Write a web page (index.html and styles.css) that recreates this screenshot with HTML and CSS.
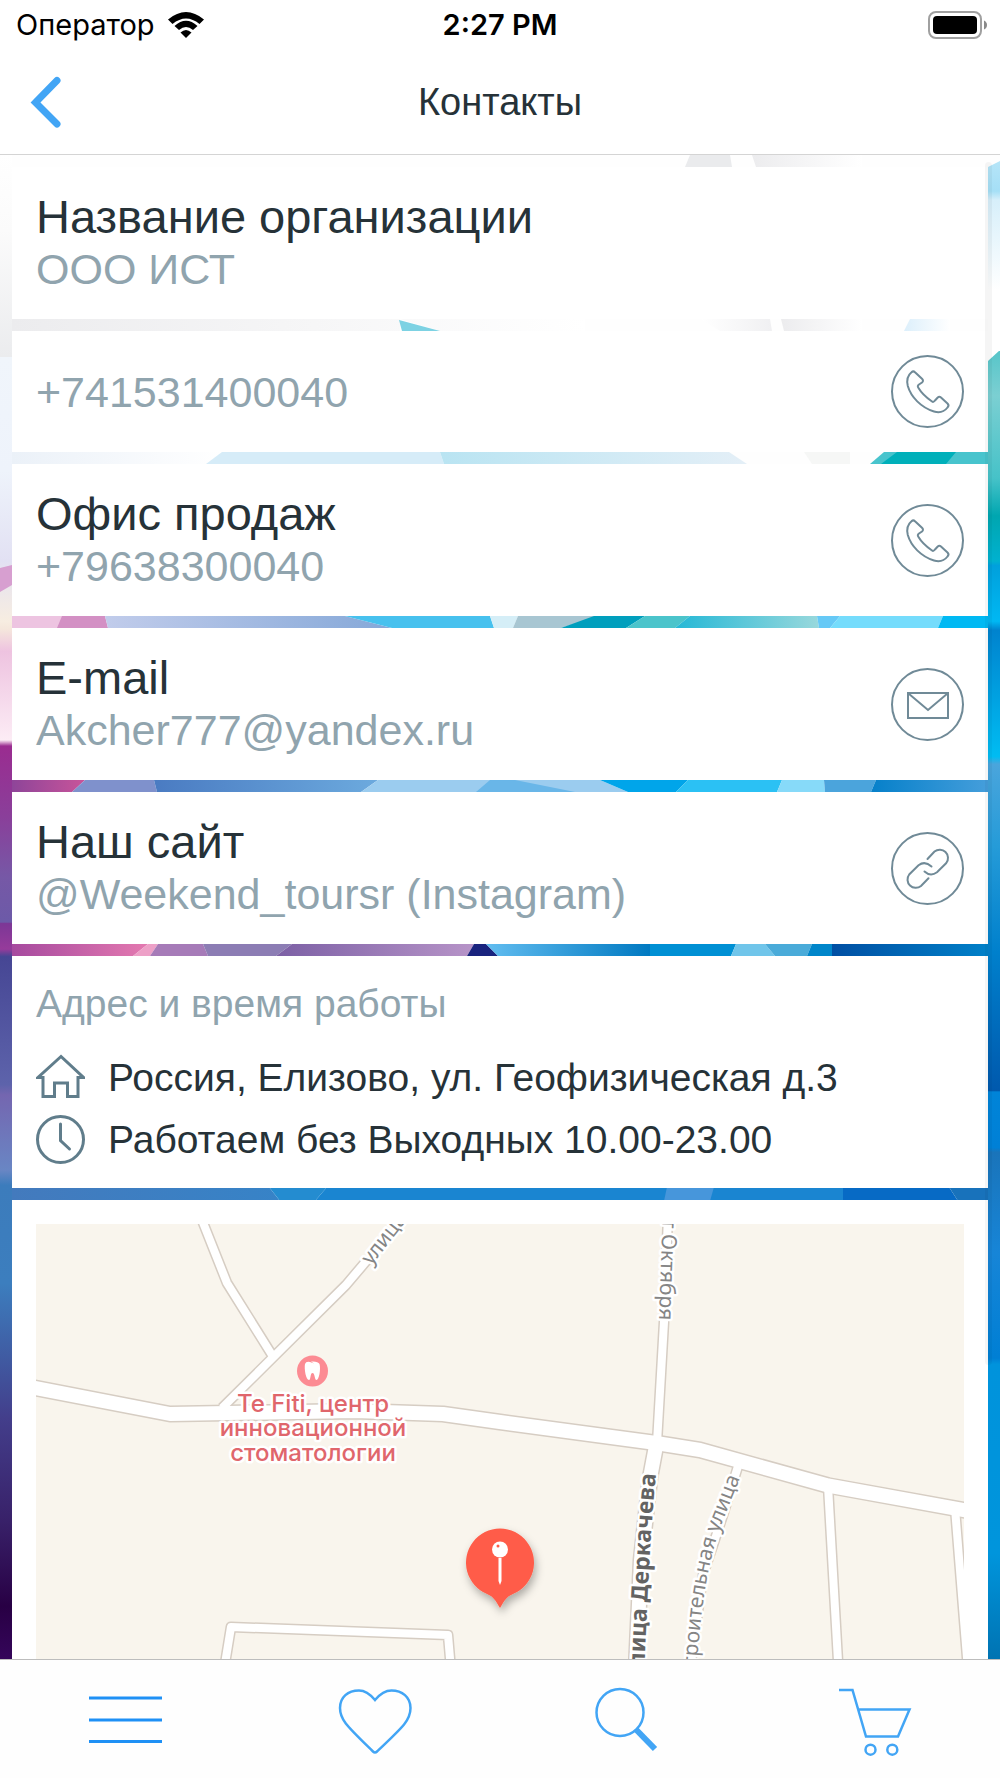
FILE: index.html
```html
<!DOCTYPE html>
<html lang="ru">
<head>
<meta charset="utf-8">
<meta name="viewport" content="width=device-width, initial-scale=1">
<title>Контакты</title>
<link rel="stylesheet" href="styles.css">
</head>
<body>
<div class="app">
  <header class="header">
    <div class="status">
      <div class="status-carrier">
        <span>Оператор</span>
        <svg class="wifi" viewBox="0 0 38 28" aria-hidden="true">
          <path d="M1 8.500Q19-6.500 37 8.500L32.500 13Q19 2 5.500 13Z"/>
          <path d="M7.500 15Q19 4.500 30.500 15L26 19Q19 13 12 19Z"/>
          <path d="M13.500 21.500Q19 16.500 24.500 21.500L19 27Z"/>
        </svg>
      </div>
      <span class="status-time">2:27 PM</span>
      <svg class="battery" viewBox="0 0 60 28" aria-hidden="true">
        <rect x="1" y="1" width="52" height="26" rx="7" fill="none" stroke="#a0a0a0" stroke-width="2"/>
        <rect x="5" y="5" width="44" height="18" rx="4"/>
        <path d="M56 9.500Q59 11 59 14T56 18.500Z" fill="#8a8a8a"/>
      </svg>
    </div>
    <nav class="navbar">
      <button class="back" type="button" aria-label="Назад">
        <svg viewBox="0 0 32 52" aria-hidden="true"><path d="M27 4.500L5.500 26.500L27 48"/></svg>
      </button>
      <h1 class="title">Контакты</h1>
    </nav>
  </header>

  <main class="content">
    <svg class="backdrop" viewBox="0 155 1000 1504" preserveAspectRatio="xMidYMin slice" aria-hidden="true">
      <defs>
        <linearGradient id="g1"><stop stop-color="#ececee"/><stop offset="1" stop-color="#fff"/></linearGradient>
        <linearGradient id="g2"><stop stop-color="#fff"/><stop offset="1" stop-color="#f0f0f2"/></linearGradient>
        <linearGradient id="g3"><stop stop-color="#dceffb"/><stop offset="1" stop-color="#fff"/></linearGradient>
        <linearGradient id="g4"><stop stop-color="#b9e4f2"/><stop offset="1" stop-color="#e4eff7"/></linearGradient>
        <linearGradient id="g5"><stop stop-color="#c1cceb"/><stop offset="1" stop-color="#85a8d8"/></linearGradient>
        <linearGradient id="g6"><stop stop-color="#25b8d6"/><stop offset="1" stop-color="#98d8dc"/></linearGradient>
        <linearGradient id="g7"><stop stop-color="#8e4599"/><stop offset="1" stop-color="#c8549a"/></linearGradient>
        <linearGradient id="g8"><stop stop-color="#4a7bc2"/><stop offset="1" stop-color="#6caade"/></linearGradient>
        <linearGradient id="g9"><stop stop-color="#0680ca"/><stop offset="1" stop-color="#459edb"/></linearGradient>
        <linearGradient id="g10"><stop stop-color="#a64a9f"/><stop offset="1" stop-color="#e479b0"/></linearGradient>
        <linearGradient id="g11"><stop stop-color="#7c60a5"/><stop offset="1" stop-color="#b794c8"/></linearGradient>
        <linearGradient id="g12"><stop stop-color="#62bdf0"/><stop offset="1" stop-color="#0079c1"/></linearGradient>
        <linearGradient id="g13"><stop stop-color="#004fa3"/><stop offset="1" stop-color="#0080c8"/></linearGradient>
        <linearGradient id="g14"><stop stop-color="#437abd"/><stop offset="1" stop-color="#3783c7"/></linearGradient>
        <linearGradient id="g15"><stop stop-color="#ebf1f8"/><stop offset="1" stop-color="#fff"/></linearGradient>
        <linearGradient id="left" x1="0" y1="155" x2="0" y2="1659" gradientUnits="userSpaceOnUse">
          <stop stop-color="#fff"/><stop offset=".05" stop-color="#fbfbfb"/><stop offset=".134" stop-color="#ebecee"/>
          <stop offset=".134" stop-color="#f0f5fb"/><stop offset=".21" stop-color="#eef3fb"/><stop offset=".27" stop-color="#e2e1f3"/>
          <stop offset=".31" stop-color="#f7ede1"/><stop offset=".315" stop-color="#f5e7dc"/>
          <stop offset=".33" stop-color="#eec3e0"/><stop offset=".389" stop-color="#fcecf5"/><stop offset=".393" stop-color="#9a2c90"/>
          <stop offset=".44" stop-color="#8a3f9a"/><stop offset=".48" stop-color="#7658a6"/><stop offset=".51" stop-color="#6c5aa8"/>
          <stop offset=".511" stop-color="#7c3796"/><stop offset=".528" stop-color="#963b9b"/><stop offset=".533" stop-color="#464694"/>
          <stop offset=".618" stop-color="#5d63ab"/><stop offset=".625" stop-color="#7466b0"/><stop offset=".675" stop-color="#6986c4"/>
          <stop offset=".685" stop-color="#3c7cbc"/><stop offset=".75" stop-color="#3c7ebe"/><stop offset=".84" stop-color="#433e8b"/>
          <stop offset=".91" stop-color="#382068"/><stop offset=".965" stop-color="#280044"/><stop offset="1" stop-color="#35065a"/>
        </linearGradient>
        <linearGradient id="right" x1="0" y1="155" x2="0" y2="1659" gradientUnits="userSpaceOnUse">
          <stop stop-color="#b9e6f8"/><stop offset=".024" stop-color="#a5dff6"/>
          <stop offset=".03" stop-color="#d7effa"/><stop offset=".09" stop-color="#fff"/><stop offset=".13" stop-color="#fff"/>
          <stop offset=".13" stop-color="#57c5c9"/><stop offset=".16" stop-color="#7bcfd2"/><stop offset=".215" stop-color="#46c2c8"/>
          <stop offset=".24" stop-color="#00a6b0"/><stop offset=".27" stop-color="#00b1cf"/><stop offset=".273" stop-color="#00a0dc"/>
          <stop offset=".31" stop-color="#00b8f3"/><stop offset=".316" stop-color="#0083ce"/><stop offset=".4" stop-color="#00bcf2"/>
          <stop offset=".405" stop-color="#4aa5dc"/><stop offset=".46" stop-color="#259bd8"/><stop offset=".53" stop-color="#0080cc"/>
          <stop offset=".622" stop-color="#0059ad"/><stop offset=".623" stop-color="#0084d8"/><stop offset=".66" stop-color="#0080d6"/>
          <stop offset=".663" stop-color="#1a74ba"/><stop offset=".73" stop-color="#1785d7"/><stop offset=".8" stop-color="#007fd4"/>
          <stop offset=".804" stop-color="#0093dc"/><stop offset=".93" stop-color="#0095dc"/><stop offset="1" stop-color="#0073b2"/>
        </linearGradient>
      </defs>
      <path fill="#fefefe" d="M0 155H1000V1659H0Z"/>
      <path fill="#eaebed" d="M690 155H730L732 167H685Z"/><path fill="url(#g1)" d="M752 155H862V167H756Z"/>
      <path fill="url(#g1)" d="M12 319H400V331H12ZM400 319H585V331H440Z"/><path fill="#7dd2e3" d="M399 320L440 331H402Z"/>
      <path fill="url(#g2)" d="M700 319H770L772 331H720Z"/><path fill="url(#g1)" d="M781 319H862V331H784Z"/><path fill="url(#g3)" d="M910 319H950V331H904Z"/>
      <path fill="url(#g15)" d="M12 452H222L206 464H12Z"/><path fill="#d6ecf8" d="M222 452H440L444 464H206Z"/>
      <path fill="url(#g4)" d="M440 452H729L747 464H444Z"/><path fill="#f6f7f6" d="M804 452H850V464H812Z"/>
      <path fill="#48c4cd" d="M884 452H988V464H870Z"/><path fill="#00b0ba" d="M897 452H956L946 464H881Z"/>
      <path fill="#edc4e1" d="M12 616H62V628H12Z"/><path fill="#d390c4" d="M62 616H105L108 628H57Z"/>
      <path fill="url(#g5)" d="M105 616H345L392 628H108Z"/><path fill="#47c1ee" d="M345 616H490L494 628H392Z"/>
      <path fill="#d5eef7" d="M490 616H518L513 628H494Z"/><path fill="#a8c6d2" d="M518 616H600L561 628H513Z"/>
      <path fill="#009fbd" d="M594 616H645L626 628H561Z"/><path fill="#4bc4cb" d="M645 616H690L675 628H626Z"/>
      <path fill="url(#g6)" d="M690 616H817L819 628H675Z"/><path fill="#66c9f6" d="M817 616H840L830 628H819Z"/>
      <path fill="#75dcfc" d="M840 616H943L938 628H830Z"/><path fill="#00b9f3" d="M943 616H988V628H938Z"/>
      <path fill="url(#g7)" d="M12 780H85L72 792H12Z"/><path fill="#7f91cc" d="M85 780H154L157 792H72Z"/>
      <path fill="url(#g8)" d="M154 780H378L361 792H157Z"/><path fill="#9bccef" d="M378 780H600L628 792H361Z"/><path fill="#69b6e8" d="M490 780H515L575 792H476Z"/>
      <path fill="#00a5ea" d="M600 780H688L676 792H628Z"/><path fill="#2bc1f4" d="M688 780H782L777 792H676Z"/>
      <path fill="#87daf9" d="M782 780H824L825 792H777Z"/><path fill="#4ba4dc" d="M824 780H876L871 792H825Z"/><path fill="url(#g9)" d="M876 780H988V792H871Z"/>
      <path fill="url(#g10)" d="M12 944H148L133 956H12Z"/><path fill="#eda0c7" d="M148 944H158L150 956H133Z"/>
      <path fill="#a67bb8" d="M158 944H203L208 956H150Z"/><path fill="#8c7db4" d="M203 944H292L276 956H208Z"/>
      <path fill="url(#g11)" d="M292 944H474L467 956H276Z"/><path fill="#19237e" d="M474 944H486L498 956H467Z"/>
      <path fill="url(#g12)" d="M486 944H650V956H498Z"/><path fill="#0090d4" d="M650 944H736L731 956H650Z"/>
      <path fill="#70c5ea" d="M736 944H765L775 956H731Z"/><path fill="#4aabd9" d="M765 944H812L807 956H775Z"/>
      <path fill="#0086ca" d="M812 944H832V956H807Z"/><path fill="url(#g13)" d="M832 944H988V956H832Z"/>
      <path fill="url(#g14)" d="M12 1187H269L280 1201H12Z"/><path fill="#248cd0" d="M269 1187H327L315 1201H280Z"/>
      <path fill="#1a85d1" d="M327 1187H843V1201H315Z"/><path fill="#4796db" d="M667 1187H714L710 1201H664Z"/>
      <path fill="#076ac5" d="M843 1187H949L958 1201H843Z"/><path fill="#1872bb" d="M949 1187H988V1201H958Z"/>
      <path fill="url(#left)" d="M0 155H12V1659H0Z"/><path fill="#d79fd0" d="M0 568L12 565V585L0 592Z"/>
      <path fill="url(#right)" d="M988 167L1000 161V1659H988Z"/><path fill="#fff" d="M988 340H1000V350L988 361Z"/>
    </svg>

    <div class="cards">
      <section class="card contact">
        <div class="contact-text"><h2>Название организации</h2><p>ООО ИСТ</p></div>
      </section>

      <a class="card contact" href="tel:+741531400040">
        <div class="contact-text"><p>+741531400040</p></div>
        <svg class="action" viewBox="0 0 73 73" aria-hidden="true"><use href="#phone"/></svg>
      </a>

      <a class="card contact" href="tel:+79638300040">
        <div class="contact-text"><h2>Офис продаж</h2><p>+79638300040</p></div>
        <svg class="action" viewBox="0 0 73 73" aria-hidden="true">
          <g id="phone"><circle cx="36.500" cy="36.500" r="35.500"/>
          <path d="M20.500 17.200Q22.300 15.500 24 17.200L31 23.800Q33 25.800 31 27.500L28 29.500Q26 31 27.500 33C31 39 36 43 41 46.500Q42.500 47.500 44 45.500L46.500 42.800Q48.300 41 50 42.500L56.500 48.500Q58.500 50.500 56.500 52.500C53 57 48 58 43 56.500C30 52.500 20 42 16.800 31C15.500 25.500 17 20 20.500 17.200Z"/></g>
        </svg>
      </a>

      <a class="card contact" href="mailto:Akcher777@yandex.ru">
        <div class="contact-text"><h2>E-mail</h2><p>Akcher777@yandex.ru</p></div>
        <svg class="action" viewBox="0 0 73 73" aria-hidden="true">
          <circle cx="36.500" cy="36.500" r="35.500"/><path d="M17 25H57V50H17ZM17.500 25.500L37 42L56.500 25.500"/>
        </svg>
      </a>

      <a class="card contact" href="https://www.instagram.com/Weekend_toursr">
        <div class="contact-text"><h2>Наш сайт</h2><p>@Weekend_toursr (Instagram)</p></div>
        <svg class="action" viewBox="0 0 73 73" aria-hidden="true">
          <circle cx="36.500" cy="36.500" r="35.500"/>
          <path d="M36.500 27L43.500 19.500A8.300 8.300 0 0 1 55.300 31L46 40.300Q39.500 45 33.500 39.500M37.500 46.300L30 54A8.300 8.300 0 0 1 18.200 42.500L27.500 33.200Q34 28.500 40.500 34.500"/>
        </svg>
      </a>

      <section class="card address">
        <h2>Адрес и время работы</h2>
        <p class="address-row">
          <svg viewBox="0 0 49 49" aria-hidden="true"><path d="M25 3.500L2 24.500H7V43.500H18.500V30H31.500V43.500H42V24.500H47.500Z"/></svg>
          <span>Россия, Елизово, ул. Геофизическая д.3</span>
        </p>
        <p class="address-row">
          <svg viewBox="0 0 49 49" aria-hidden="true"><circle cx="24.500" cy="24.500" r="23"/><path d="M24.500 9V25.500L33.500 34"/></svg>
          <span>Работаем без Выходных 10.00-23.00</span>
        </p>
      </section>

      <section class="card map-card">
        <svg class="map" viewBox="36 1224 928 560" preserveAspectRatio="xMidYMin slice" role="img" aria-label="Карта">
          <defs>
            <path id="road-main" d="M20 1385L170 1414L355 1411L443 1414L500 1422L656 1443L700 1450L828 1485.500L980 1513"/>
            <g id="roads-small">
              <path d="M200 1215L227 1283L272 1355M368 1259L346 1285L222 1408M668 1215L664 1322L657 1443M739 1463L724 1512L703 1575L690 1670M828 1486L838.500 1670M955 1508L968 1670M224 1670L231 1627L448 1635L451 1670"/>
            </g>
            <path id="road-wide" d="M656 1446L650 1478L641 1560L636 1670"/>
            <path id="label-wide" d="M640 1800Q647 1560 656 1474"/>
            <path id="label-curve" d="M692 1800C695 1620 706 1570 720 1528L740 1478"/>
            <path id="label-diagonal" d="M371 1266L415 1210"/>
            <filter id="shade" x="-30%" y="-30%" width="160%" height="170%"><feDropShadow dx="2" dy="5" stdDeviation="4" flood-opacity=".3"/></filter>
          </defs>
          <path fill="#f9f5ed" d="M0 1200H1000V1800H0Z"/>
          <g class="road-edge"><use href="#road-main" stroke-width="17"/><use href="#road-wide" stroke-width="17"/><use href="#roads-small" stroke-width="11"/></g>
          <g class="road-fill"><use href="#road-main" stroke-width="14"/><use href="#road-wide" stroke-width="14"/><use href="#roads-small" stroke-width="8"/></g>
          <text class="street"><textPath href="#label-diagonal">улица</textPath></text>
          <text class="street" text-anchor="end" transform="translate(659 1320) rotate(92)">лет Октября</text>
          <text class="street street-main" text-anchor="end"><textPath href="#label-wide" startOffset="100%">улица Деркачева</textPath></text>
          <text class="street" text-anchor="end"><textPath href="#label-curve" startOffset="100%">Строительная улица</textPath></text>
          <circle cx="312.500" cy="1371" r="15.500" fill="#fc8b93"/>
          <path fill="#fff" d="M305 1364Q306 1361 310 1362L314 1363.500L311 1361.500Q318 1361 319.500 1364C321 1369 319 1380 316.500 1380C314.500 1380 315 1373 312.500 1373S311 1380 309 1380C306 1380 304 1369 305 1364Z"/>
          <g class="place" text-anchor="middle">
            <text x="313" y="1412">Te Fiti, центр</text><text x="313" y="1436">инновационной</text><text x="313" y="1461">стоматологии</text>
          </g>
          <path filter="url(#shade)" fill="#ff5c48" d="M500 1608C495 1600 494 1597 487 1594A34 34 0 1 1 513 1594C506 1597 505 1600 500 1608Z"/>
          <circle cx="500" cy="1549.500" r="8" fill="#fff"/><circle cx="498" cy="1546" r="1.500" fill="#ff5c48"/>
          <path fill="#fff" d="M498.500 1558H501.500V1581L500 1585L498.500 1581Z"/>
        </svg>
      </section>
    </div>
    <div class="scroll-thumb"></div>
  </main>

  <nav class="tabbar">
    <button type="button" aria-label="Меню"><svg viewBox="0 0 74 74" aria-hidden="true"><path stroke="#1e90f5" stroke-width="3" d="M1 16H74M1 38H74M1 59.500H74"/></svg></button>
    <button type="button" aria-label="Избранное"><svg viewBox="0 0 74 74" aria-hidden="true"><path d="M37 18C32 12 27 8.500 21 8.500C10 8.500 2 15 2 26C2 38 9 44 35 69.500Q37 71.500 39 69.500C66 44 72.500 38 72.500 26C72.500 15 64 8.500 53.500 8.500C47 8.500 42 12 37 18Z"/></svg></button>
    <button type="button" aria-label="Поиск"><svg viewBox="0 0 74 74" aria-hidden="true"><circle cx="32" cy="30.500" r="23.500"/><path stroke-width="6" d="M48 47.500L67 67"/></svg></button>
    <button type="button" aria-label="Корзина"><svg viewBox="0 0 74 74" aria-hidden="true"><path d="M1 8H14.500L28 54.500H60L71.500 27.500H21"/><circle cx="32.500" cy="67.700" r="5"/><circle cx="54.300" cy="67.700" r="5"/></svg></button>
  </nav>
</div>
</body>
</html>
```
FILE: styles.css
```css
* {
  box-sizing: border-box;
}

body,
h1,
h2,
p {
  margin: 0;
  font-weight: 400;
}

body {
  font-family: "Liberation Sans", Arial, sans-serif;
  color: #263238;
  background: #fff;
}

button {
  padding: 0;
  border: 0;
  background: none;
}

svg {
  display: block;
  flex: none;
}

.app {
  display: flex;
  flex-direction: column;
  height: 100vh;
}

.header {
  flex: none;
  background: #fff;
  border-bottom: 1px solid #d4d4d4;
}

.status {
  display: grid;
  grid-template-columns: 1fr auto 1fr;
  align-items: center;
  height: 50px;
  padding: 0 12px;
  font: 400 29px/50px Inter, sans-serif;
  color: #000;
}

.status-carrier {
  display: flex;
  align-items: center;
  gap: 12px;
  padding-left: 4px;
}

.wifi {
  width: 38px;
  height: 28px;
}

.status-time {
  font-weight: 600;
}

.battery {
  width: 60px;
  height: 28px;
  justify-self: end;
}

.navbar {
  display: grid;
  grid-template-columns: 1fr auto 1fr;
  align-items: center;
  height: 104px;
  padding: 0 30px;
}

.back {
  justify-self: start;
}

.back svg {
  width: 32px;
  height: 52px;
  fill: none;
  stroke: #42a5f5;
  stroke-width: 7;
  stroke-linecap: round;
}

.title {
  font-size: 38px;
  line-height: 46px;
}

.content {
  position: relative;
  flex: 1;
  min-height: 0;
  overflow: hidden;
}

.backdrop {
  position: absolute;
  inset: 0;
  width: 100%;
  height: 100%;
}

.cards {
  position: relative;
  display: flex;
  flex-direction: column;
  gap: 12px;
  height: 100%;
  padding: 12px;
  overflow-y: auto;
  scrollbar-width: none;
}

.scroll-thumb {
  position: absolute;
  top: 7px;
  right: 8px;
  width: 7px;
  height: 80%;
  border-radius: 4px;
  background: rgba(0, 0, 0, 0.04);
}

.card {
  flex: none;
  padding: 24px;
  background: #fff;
  color: inherit;
  text-decoration: none;
}

.contact {
  display: flex;
  align-items: center;
  justify-content: space-between;
}

.contact h2 {
  font-size: 47px;
  line-height: 52px;
}

.contact p {
  font-size: 43px;
  line-height: 52px;
  color: #90a4ae;
}

.action {
  width: 73px;
  height: 73px;
  fill: none;
  stroke: #708a97;
  stroke-width: 2;
  stroke-linecap: round;
}

.address h2 {
  margin-bottom: 25px;
  font-size: 39px;
  line-height: 48px;
  color: #90a4ae;
}

.address-row {
  display: flex;
  align-items: center;
  gap: 23px;
  font-size: 39px;
  line-height: 49px;
}

.address-row + .address-row {
  margin-top: 13px;
}

.address-row svg {
  width: 49px;
  height: 49px;
  fill: none;
  stroke: #607d8b;
  stroke-width: 3;
  stroke-linecap: round;
}

.map {
  width: 100%;
  height: 560px;
}

.road-edge,
.road-fill {
  fill: none;
  stroke-linejoin: round;
}

.road-edge {
  stroke: #d6cdc3;
}

.road-fill {
  stroke: #fff;
}

.street,
.place {
  paint-order: stroke;
  stroke: #fff;
  stroke-width: 5px;
  stroke-linejoin: round;
}

.street {
  font: 400 21px "Noto Sans", sans-serif;
  fill: #858585;
}

.street-main {
  font-size: 23px;
  font-weight: 700;
  fill: #636363;
}

.place {
  font: 500 24px Inter, sans-serif;
  fill: #e0666c;
}

.tabbar {
  display: grid;
  grid-template-columns: repeat(4, 1fr);
  flex: none;
  height: 119px;
  background: #fefefe;
  border-top: 1px solid #bdbdbd;
}

.tabbar button {
  display: grid;
  place-items: center;
}

.tabbar svg {
  width: 74px;
  height: 74px;
  fill: none;
  stroke: #42a5f5;
  stroke-width: 2.5px;
}
```
